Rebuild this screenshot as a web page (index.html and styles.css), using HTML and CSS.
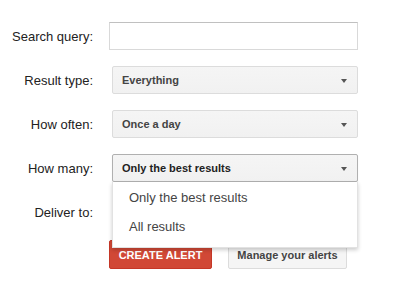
FILE: index.html
```html
<!DOCTYPE html>
<html lang="en">
<head>
    <meta charset="UTF-8">
    <title>Create alert</title>
    <link rel="stylesheet" href="styles.css">
</head>
<body>
    <div class="alert-form">
        <label class="field-label">Search query:</label>
        <div class="text-input"></div>

        <label class="field-label">Result type:</label>
        <div class="select-box">Everything<span class="arrow"></span></div>

        <label class="field-label">How often:</label>
        <div class="select-box">Once a day<span class="arrow"></span></div>

        <label class="field-label">How many:</label>
        <div class="select-wrap">
            <div class="select-box open">Only the best results<span class="arrow"></span></div>
            <div class="menu">
                <div class="menu-item">Only the best results</div>
                <div class="menu-item">All results</div>
            </div>
        </div>

        <label class="field-label">Deliver to:</label>
        <div class="select-box"><span class="arrow"></span></div>

        <span></span>
        <div class="actions">
            <button class="btn btn-red">CREATE ALERT</button>
            <button class="btn btn-grey">Manage your alerts</button>
        </div>
    </div>
</body>
</html>
```

FILE: styles.css
```css
body {
    margin: 0;
    background: #fff;
    font-family: 'Liberation Sans', Arial, sans-serif;
}

.alert-form {
    display: grid;
    grid-template-columns: 93px 249px;
    grid-auto-rows: 28px;
    column-gap: 16px;
    row-gap: 16px;
    padding-top: 22px;
}

.field-label {
    align-self: center;
    justify-self: end;
    font-size: 13px;
    color: #222;
}

.text-input {
    box-sizing: border-box;
    height: 28px;
    background: #fff;
    border: 1px solid #d9d9d9;
    border-top-color: #c0c0c0;
}

.select-wrap {
    position: relative;
}

.select-box {
    box-sizing: border-box;
    position: relative;
    height: 28px;
    margin-left: 3px;
    padding-left: 9px;
    line-height: 26px;
    font-size: 11px;
    font-weight: bold;
    color: #444;
    background: linear-gradient(#f5f5f5, #f1f1f1);
    border: 1px solid #dcdcdc;
    border-radius: 2px;
}

.select-box.open {
    border-color: #b0b0b0;
    color: #222;
    box-shadow: 0 1px 1px rgba(0, 0, 0, 0.1);
}

.arrow {
    position: absolute;
    right: 10px;
    top: 12px;
    width: 0;
    height: 0;
    border-left: 3.5px solid transparent;
    border-right: 3.5px solid transparent;
    border-top: 4px solid #555;
}

.menu {
    position: absolute;
    left: 3px;
    right: 0;
    top: 28px;
    z-index: 2;
    padding: 1px 0 6px;
    background: #fff;
    border: 1px solid #e2e2e2;
    border-top: none;
    box-shadow: 0 2px 4px rgba(0, 0, 0, 0.2);
}

.menu-item {
    padding-left: 16px;
    height: 29px;
    line-height: 29px;
    font-size: 13px;
    color: #444;
}

.actions {
    display: flex;
    gap: 16px;
    margin-top: -2px;
}

.btn {
    height: 29px;
    padding: 0 8px;
    font-family: inherit;
    font-size: 11px;
    font-weight: bold;
    border-radius: 2px;
}

.btn-red {
    width: 103px;
    color: #fff;
    background: #d14836;
    border: 1px solid #c53727;
}

.btn-grey {
    width: 119px;
    color: #444;
    background: #f5f5f5;
    border: 1px solid #dcdcdc;
}
```
